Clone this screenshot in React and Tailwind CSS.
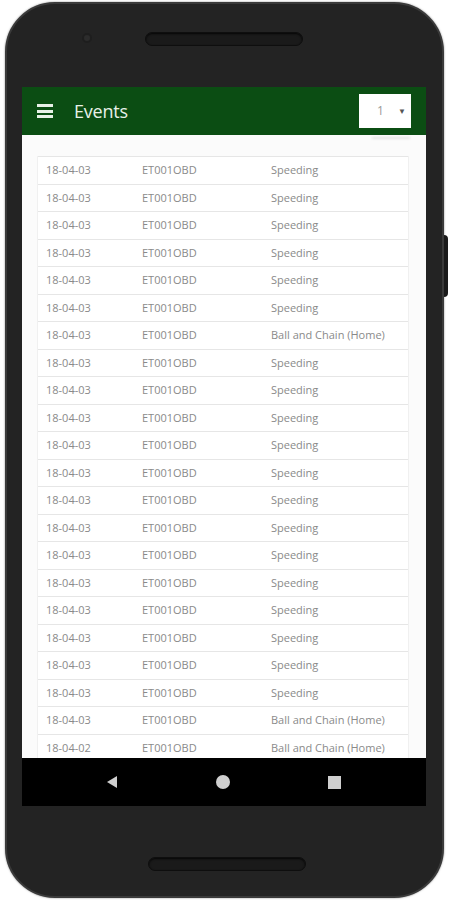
import { useState } from "react";

const rows = [
  ["18-04-03", "ET001OBD", "Speeding"],
  ["18-04-03", "ET001OBD", "Speeding"],
  ["18-04-03", "ET001OBD", "Speeding"],
  ["18-04-03", "ET001OBD", "Speeding"],
  ["18-04-03", "ET001OBD", "Speeding"],
  ["18-04-03", "ET001OBD", "Speeding"],
  ["18-04-03", "ET001OBD", "Ball and Chain (Home)"],
  ["18-04-03", "ET001OBD", "Speeding"],
  ["18-04-03", "ET001OBD", "Speeding"],
  ["18-04-03", "ET001OBD", "Speeding"],
  ["18-04-03", "ET001OBD", "Speeding"],
  ["18-04-03", "ET001OBD", "Speeding"],
  ["18-04-03", "ET001OBD", "Speeding"],
  ["18-04-03", "ET001OBD", "Speeding"],
  ["18-04-03", "ET001OBD", "Speeding"],
  ["18-04-03", "ET001OBD", "Speeding"],
  ["18-04-03", "ET001OBD", "Speeding"],
  ["18-04-03", "ET001OBD", "Speeding"],
  ["18-04-03", "ET001OBD", "Speeding"],
  ["18-04-03", "ET001OBD", "Speeding"],
  ["18-04-03", "ET001OBD", "Ball and Chain (Home)"],
  ["18-04-02", "ET001OBD", "Ball and Chain (Home)"],
];

const Speaker = () => (
  <div className="w-[158px] h-[14px] rounded-full bg-[#1a1a1a] border border-[#0e0e0e] shadow-[inset_0_1px_2px_rgba(0,0,0,0.8)]" />
);

const App = () => {
  const [page, setPage] = useState("1");

  return (
    <div className="w-[450px] h-[900px] bg-white overflow-hidden font-['Open_Sans',sans-serif]">
      <div className="relative ml-[5px] mt-[2px] w-[439px] h-[896px] rounded-[50px] bg-[#232323] border-2 border-[#3a3a3a] shadow-[0_0_2px_rgba(0,0,0,0.5)]">
        {/* side button */}
        <div className="absolute right-[-6px] top-[231px] w-[4px] h-[62px] rounded-r-sm bg-[#1a1a1a]" />

        {/* top bezel */}
        <div className="relative h-[83px]">
          <div className="absolute left-[75px] top-[29px] w-[10px] h-[10px] rounded-full bg-[#2c2c2c] border-2 border-[#1e1e1e]" />
          <div className="absolute left-[138px] top-[28px]">
            <Speaker />
          </div>
        </div>

        {/* screen */}
        <div className="ml-[15px] w-[404px] h-[719px] flex flex-col bg-white">
          <div className="h-[48px] bg-[#0b4d13] flex items-center pl-[15px] pr-[15px]">
            <div className="flex flex-col gap-[2.5px] w-[16px]">
              <div className="h-[3px] bg-[#e8f1e8]" />
              <div className="h-[3px] bg-[#e8f1e8]" />
              <div className="h-[3px] bg-[#e8f1e8]" />
            </div>
            <span className="ml-[21px] text-[18px] text-[#e8f1e8] tracking-[-0.2px]">Events</span>
            <button
              onClick={() => setPage(page)}
              className="ml-auto w-[52px] h-[34px] bg-white flex items-center justify-between pl-[18px] pr-[5px] text-[12px] text-[#9a9a9a]"
            >
              <span>{page}</span>
              <span className="text-[8px] text-[#555]">▼</span>
            </button>
          </div>

          <div className="relative flex-1 overflow-hidden bg-[#fbfbfb]">
            <div className="absolute right-[16px] top-[2px] w-[38px] h-[2px] bg-[#e4e4e4] blur-[1px]" />
            <div className="ml-[15px] mr-[17px] mt-[21px] bg-white border-x border-[#f0f0f0]">
              {rows.map((r, i) => (
                <div
                  key={i}
                  className="h-[27.5px] flex items-center border-t border-[#e6e6e6] text-[11px] text-[#8a8a8a]"
                >
                  <span className="pl-[8px] w-[104px]">{r[0]}</span>
                  <span className="w-[129px]">{r[1]}</span>
                  <span>{r[2]}</span>
                </div>
              ))}
            </div>
          </div>

          <div className="h-[48px] bg-black flex items-center shrink-0">
            <svg className="ml-[84px]" width="12" height="14" viewBox="0 0 12 14">
              <path d="M11 1 L1 7 L11 13 Z" fill="#cfcfcf" />
            </svg>
            <div className="ml-[98px] w-[14px] h-[14px] rounded-full bg-[#cfcfcf]" />
            <div className="ml-[98px] w-[13px] h-[13px] bg-[#cfcfcf]" />
          </div>
        </div>

        {/* bottom bezel */}
        <div className="relative h-[90px]">
          <div className="absolute left-[141px] top-[51px]">
            <Speaker />
          </div>
        </div>
      </div>
    </div>
  );
};

export default App;
